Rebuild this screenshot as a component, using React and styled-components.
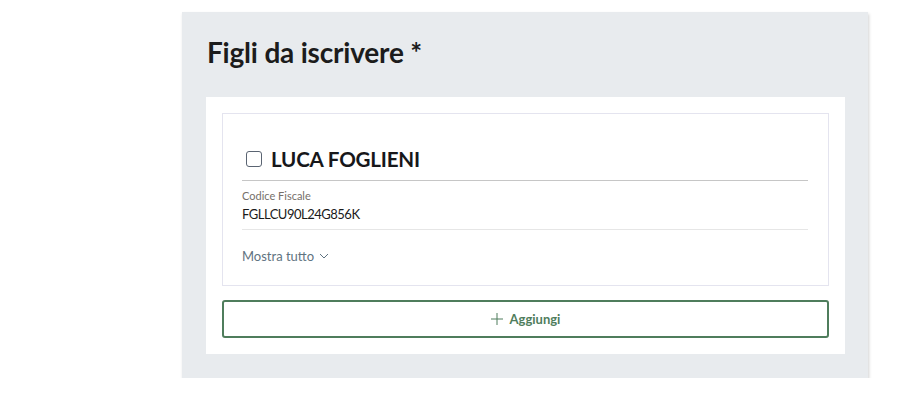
import React from "react";
import styled, { createGlobalStyle } from "styled-components";

const Global = createGlobalStyle`
  html, body { margin: 0; padding: 0; background: #fff; }
  body { font-family: "Lato", "Noto Sans", sans-serif; color: #1a1a1a; }
  * { box-sizing: border-box; }
`;

const Page = styled.div`
  padding: 12px 0 0 182px;
`;

const Panel = styled.section`
  width: 686px;
  background: #e8ebee;
  padding: 22px 23px 24px 24px;
  box-shadow: 1px 2px 3px rgba(0, 0, 0, 0.18);
`;

const Title = styled.h2`
  margin: 0 0 27px 1px;
  font-size: 28px;
  line-height: 36px;
  font-weight: 700;
  color: #1c1c1c;
  letter-spacing: -0.2px;
`;

const Body = styled.div`
  background: #fff;
  padding: 16px;
  display: flex;
  flex-direction: column;
  gap: 14px;
`;

const Card = styled.div`
  border: 1px solid #e4e4ef;
  padding: 27px 20px 20px 19px;
  display: flex;
  flex-direction: column;
`;

const Header = styled.label`
  display: flex;
  align-items: center;
  gap: 9px;
  height: 40px;
  padding-left: 4px;
  border-bottom: 1px solid #c6c6c6;
  padding-bottom: 3px;
`;

const Check = styled.span`
  width: 16px;
  height: 16px;
  border: 1.5px solid #5a6472;
  border-radius: 3px;
  background: #fff;
`;

const Name = styled.span`
  font-size: 20.6px;
  font-weight: 700;
  color: #17171a;
  letter-spacing: -0.2px;
`;

const Field = styled.div`
  padding: 7px 0 6px;
  border-bottom: 1px solid #e6e6e6;
  display: flex;
  flex-direction: column;
  gap: 2px;
`;

const Label = styled.span`
  font-size: 11px;
  line-height: 15px;
  color: #76706a;
`;

const Value = styled.span`
  font-size: 13px;
  line-height: 18px;
  color: #1a1a1a;
  letter-spacing: -0.5px;
`;

const More = styled.button`
  margin-top: 17px;
  align-self: flex-start;
  background: none;
  border: 0;
  padding: 0;
  font-family: inherit;
  font-size: 13px;
  line-height: 18px;
  color: #5f7381;
  display: flex;
  align-items: center;
  gap: 5px;
  cursor: pointer;
`;

const AddButton = styled.button`
  height: 38px;
  border: 2px solid #4f7d5c;
  border-radius: 3px;
  background: #fff;
  color: #4f7d5c;
  font-family: inherit;
  font-size: 13px;
  font-weight: 700;
  display: flex;
  align-items: center;
  justify-content: center;
  gap: 7px;
  cursor: pointer;
`;

export default function App() {
  return (
    <>
      <Global />
      <Page>
        <Panel>
          <Title>Figli da iscrivere *</Title>
          <Body>
            <Card>
              <Header>
                <Check />
                <Name>LUCA FOGLIENI</Name>
              </Header>
              <Field>
                <Label>Codice Fiscale</Label>
                <Value>FGLLCU90L24G856K</Value>
              </Field>
              <More>
                Mostra tutto
                <svg width="10" height="6" viewBox="0 0 10 6" fill="none">
                  <path d="M1 1l4 4 4-4" stroke="#5f7381" strokeWidth="1" />
                </svg>
              </More>
            </Card>
            <AddButton>
              <svg width="12" height="12" viewBox="0 0 12 12" fill="none">
                <path d="M6 0v12M0 6h12" stroke="#4f7d5c" strokeWidth="1" />
              </svg>
              Aggiungi
            </AddButton>
          </Body>
        </Panel>
      </Page>
    </>
  );
}
